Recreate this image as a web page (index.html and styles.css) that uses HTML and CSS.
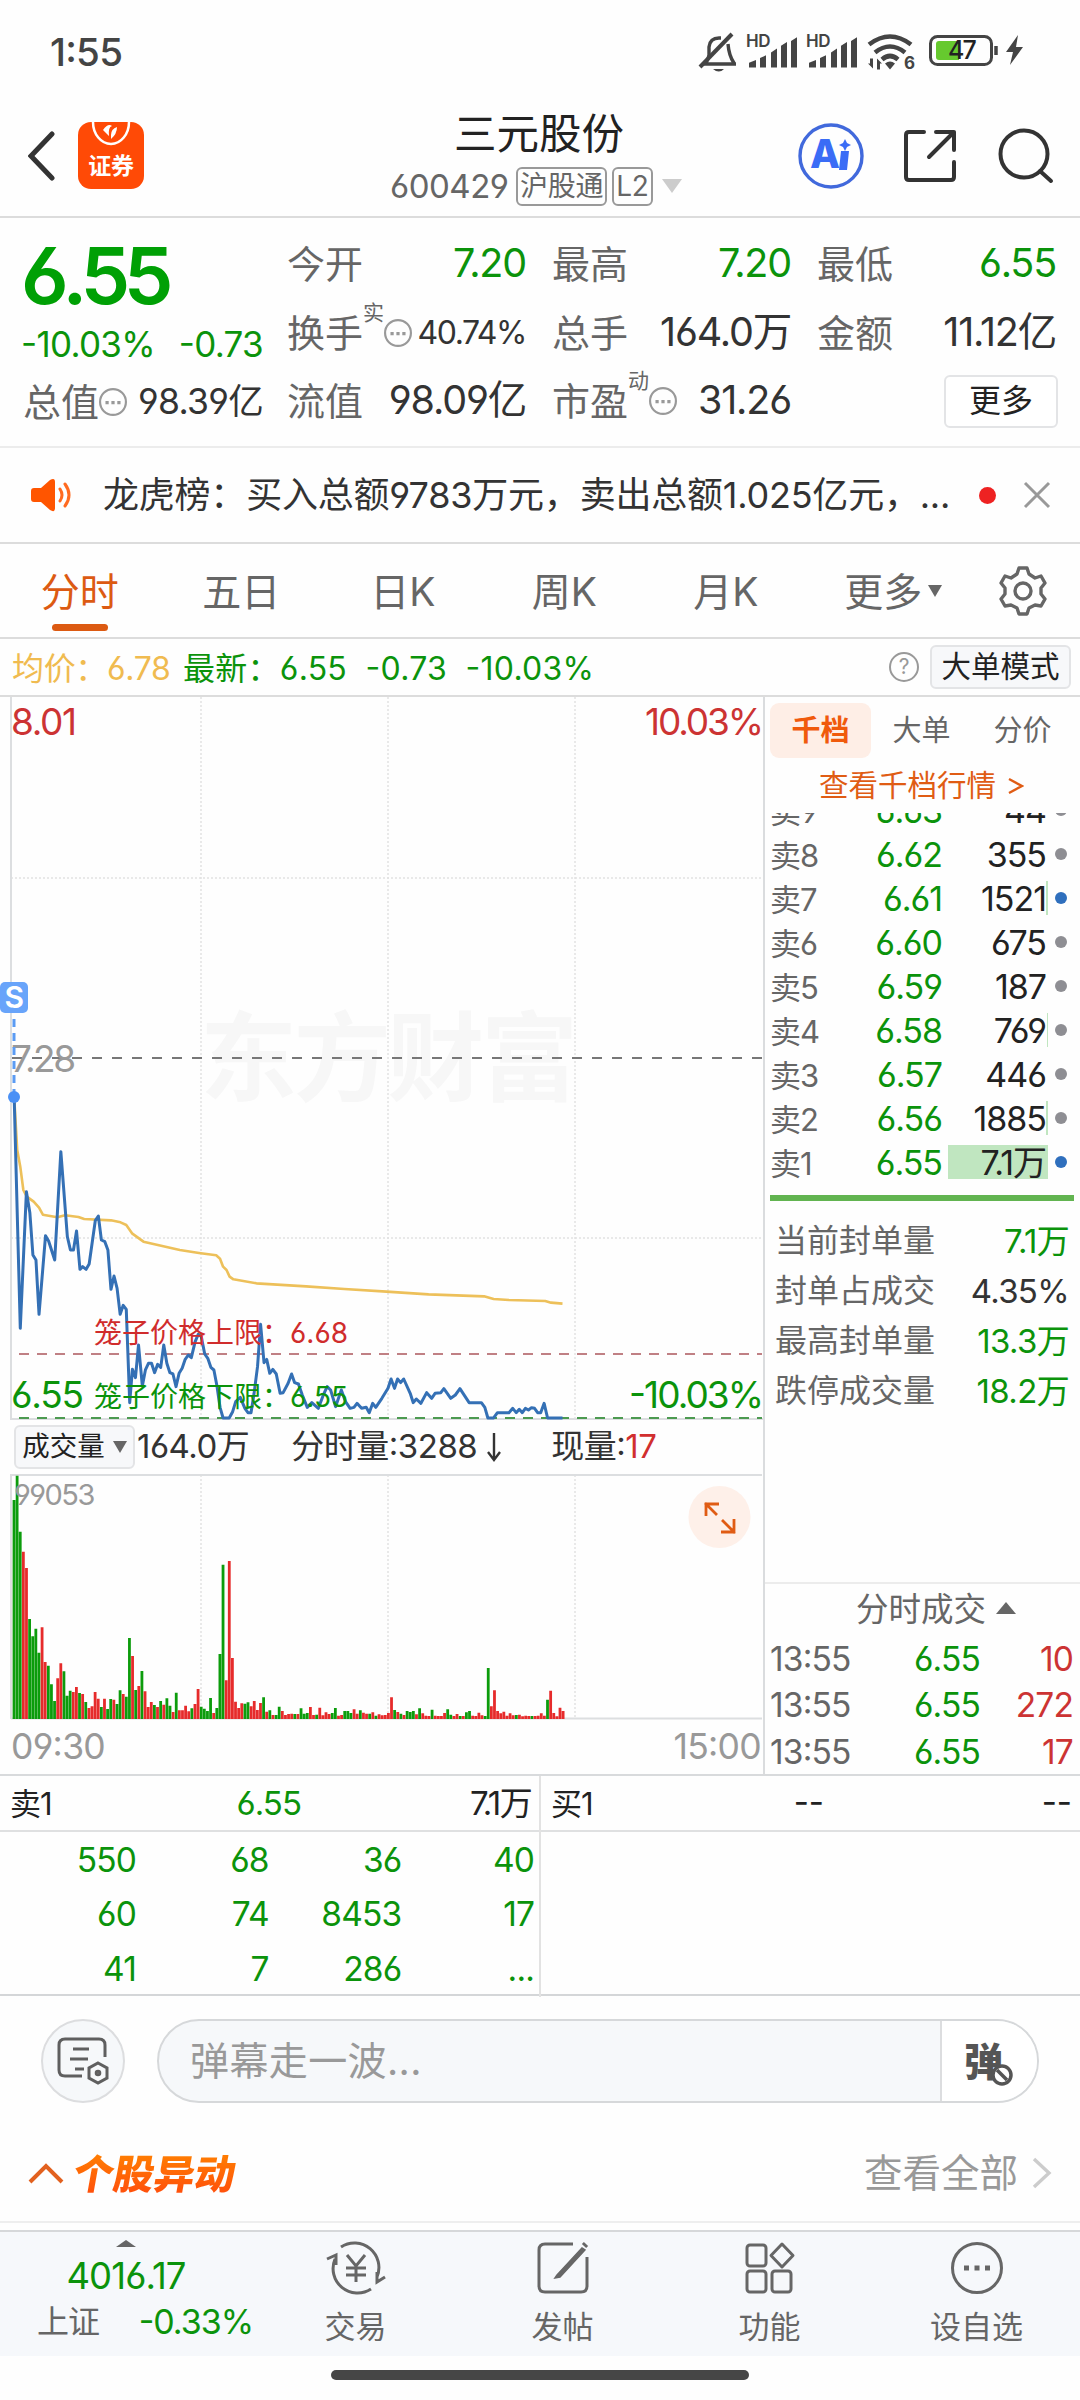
FILE: index.html
```html
<!DOCTYPE html>
<html lang="zh-CN">
<head>
<meta charset="utf-8">
<title>三元股份 600429</title>
<link rel="stylesheet" href="styles.css">
</head>
<body>
<div class="status">
  <span class="clock">1:55</span>
  <svg class="status-icons" width="340" height="44" viewBox="0 0 340 44" fill="none" stroke="#444" stroke-width="3.4">
    <path d="M4 35h34M8 34q2-3 3-8v-8q1-9 10-9h2M30 15q1 12 6 19"/><path d="M2 38 34 5" stroke-width="4"/><path d="M15 40h11q-5 5-11 0z" fill="#444" stroke="none"/>
    <g fill="#444" stroke="none">
      <text x="48" y="18" class="hd">HD</text><path id="sig" d="M51 38v-5l7-3v8zM62 38V28l6-3v13zM73 38V22l6-4v20zM83 38V15l6-4v27zM93 38V10l6-4v32z" transform="translate(0 2.500) scale(1 .95)"/>
      <text x="108" y="18" class="hd">HD</text><use href="#sig" x="60"/>
    </g>
    <g transform="translate(0 -.5)"><path d="M171 16q21-16 42 0M177 24q15-12 30 0M184 31q8-7 16 0" stroke-width="4.600"/><path d="m187 35q5-4 10 0l-5 6zM172 30h3v10l-5-5h2zM179 41V30l5 5h-2v6z" fill="#444" stroke="none"/></g>
    <text x="206" y="40" class="six" fill="#444" stroke="none">6</text>
    <rect x="232.500" y="7.500" width="61" height="28" rx="7" stroke-width="3"/>
    <path d="M238 15q0-3 3-3h20v19h-20q-3 0-3-3z" fill="#66c92e" stroke="none"/>
    <path d="M298 17v9" stroke-width="3.500"/>
    <text x="250" y="30" class="pct" fill="#222" stroke="none">47</text>
    <path d="m320 6-12 17h7l-3 13 13-18h-7z" fill="#444" stroke="none"/>
  </svg>
</div>

<header class="top">
  <div class="top-left">
    <svg width="28" height="50" viewBox="0 0 28 50" fill="none" stroke="#333" stroke-width="5" stroke-linecap="round"><path d="M24 3 3 25l21 22"/></svg>
    <div class="logo">
      <svg width="66" height="25" viewBox="0 0 66 25" fill="none"><path d="M15 0a18 22 0 0 0 36 0" stroke="#fff" stroke-width="2.500"/><path d="M25 8q5-7 9-4-4 1-3 10zM33 13q0-6 6-8 0 7-6 12z" fill="#fff"/></svg>
      <span>证券</span>
    </div>
  </div>
  <div class="title">
    <h1>三元股份</h1>
    <div class="code"><span>600429</span><i>沪股通</i><i>L2</i><b class="tri-down light"></b></div>
  </div>
  <div class="top-right">
    <svg width="66" height="66" viewBox="0 0 66 66" fill="#3a6cf6"><circle cx="33" cy="33" r="31" fill="none" stroke="#4169dc" stroke-width="3.400"/><text x="12" y="45" class="ai">A</text><path d="M43 28h8l-2 19h-8zM47 16l2 4 4 2-4 2-2 4-2-4-4-2 4-2z"/></svg>
    <svg width="54" height="54" viewBox="0 0 54 54" fill="none" stroke="#333" stroke-width="4" stroke-linecap="round" stroke-linejoin="round"><path d="M21 3H6q-3 0-3 3v42q0 3 3 3h42q3 0 3-3V33M33 3h18v18M51 3 26 28"/></svg>
    <svg width="56" height="56" viewBox="0 0 56 56" fill="none" stroke="#333" stroke-width="4" stroke-linecap="round"><circle cx="26" cy="26" r="23.500"/><path d="m42 43 11 10"/></svg>
  </div>
</header>

<section class="quote">
  <div class="q-main">
    <div class="price">6.55</div>
    <div class="chg"><span>-10.03%</span><span>-0.73</span></div>
    <div class="cell small"><label>总值</label><svg class="more" viewBox="0 0 26 26"><use href="#dots"/></svg><em>98.39亿</em></div>
  </div>
  <div class="q-grid">
    <div class="cell g"><label>今开</label><em>7.20</em></div>
    <div class="cell g"><label>最高</label><em>7.20</em></div>
    <div class="cell g"><label>最低</label><em>6.55</em></div>
    <div class="cell small"><label>换手</label><sup>实</sup><svg class="more" viewBox="0 0 26 26"><g id="dots"><circle cx="13" cy="13" r="12" fill="none" stroke="#999" stroke-width="2"/><path d="M6 12h3v3h-3zM11.500 12h3v3h-3zM17 12h3v3h-3z" fill="#999"/></g></svg><em class="tight">40.74%</em></div>
    <div class="cell"><label>总手</label><em>164.0万</em></div>
    <div class="cell"><label>金额</label><em>11.12亿</em></div>
    <div class="cell"><label>流值</label><em>98.09亿</em></div>
    <div class="cell"><label>市盈</label><sup>动</sup><svg class="more" viewBox="0 0 26 26"><use href="#dots"/></svg><em>31.26</em></div>
    <div class="cell end"><button>更多</button></div>
  </div>
</section>

<section class="news">
  <svg width="42" height="36" viewBox="0 0 42 36"><path d="M3 11h7l9-8q5-3 5 2v26q0 5-5 2l-9-8H3q-3 0-3-3v-8q0-3 3-3z" fill="#ff5500"/><path d="M29 12q4 6 0 12M34 7q8 11 0 22" fill="none" stroke="#ff6a20" stroke-width="3" stroke-linecap="round"/></svg>
  <p>龙虎榜：买入总额9783万元，卖出总额1.025亿元，...</p>
  <i class="dot"></i>
  <svg width="28" height="28" viewBox="0 0 28 28" stroke="#999" stroke-width="3"><path d="m2 2 24 24M26 2 2 26"/></svg>
</section>

<nav class="tabs">
  <a class="on">分时</a><a>五日</a><a>日K</a><a>周K</a><a>月K</a><a class="more-tab">更多<b class="tri-down"></b></a>
  <span class="gear"><svg width="48" height="50" viewBox="0 0 48 50" fill="none" stroke="#666" stroke-width="3.400" stroke-linejoin="round"><path d="M20 2h8l2 6 6 4 6-2 4 7-4 5v6l4 5-4 7-6-1-6 3-2 6h-8l-2-6-6-3-6 1-4-7 4-5v-6l-4-5 4-7 6 2 6-4z"/><circle cx="24" cy="25" r="8"/></svg></span>
</nav>

<div class="info">
  <span class="avg">均价：6.78</span><span class="last">最新：6.55&nbsp; -0.73&nbsp; -10.03%</span>
  <span class="help">?</span><button>大单模式</button>
</div>

<main class="board">
  <div class="charts">
    <svg class="plot" width="763" height="724" viewBox="0 697 763 724">
      <text x="200" y="1093" class="mark" textLength="378">东方财富</text>
      <g class="grid"><path d="M201 697v721M388 697v721M575 697v721M11 878h751M11 1238h751"/></g>
      <path d="M11 697v722h752" class="axis"/>
      <path d="M12 1058h750" stroke="#777" stroke-width="2" stroke-dasharray="10 10" stroke-dashoffset="0"/>
      <path d="M19 1354h743" stroke="#c08084" stroke-width="2" stroke-dasharray="10 8"/>
      <path d="M19 1418h743" stroke="#4c9a50" stroke-width="2" stroke-dasharray="10 8"/>
      <g class="lbl">
        <text x="11" y="1072" fill="#999" textLength="64">7.28</text>
        <text x="11" y="735" fill="#c33" textLength="65">8.01</text>
        <text x="645" y="735" fill="#c33" textLength="118">10.03%</text>
      </g>
      <g class="curve" transform="translate(0 1080) scale(.38265 .33333)" fill="none">
        <polyline stroke="#edc05a" stroke-width="2.600" points="37,50 45,210 53,260 61,330 70,350 88,365 102,383 112,404 150,412 170,406 205,411 220,417 290,421 315,427 330,435 345,460 375,485 470,510 520,519 565,526 575,536 583,560 592,570 600,590 610,598 670,610 800,619 900,627 1010,635 1120,643 1265,649 1290,657 1330,660 1425,663 1440,668 1470,671"/>
        <polyline stroke="#3470b5" stroke-width="3" points="37,50 53,745 69,335 78,398 86,525 94,540 102,703 119,467 127,483 143,540 159,215 176,470 184,510 192,510 200,453 209,568 216,560 225,568 233,552 249,422 257,408 265,480 274,485 282,510 290,628 298,588 306,625 314,703 322,676 330,688 339,968 346,868 354,893 362,795 372,918 380,870 388,850 396,850 404,878 412,853 420,862 428,795 436,850 444,878 452,882 460,920 468,880 476,865 484,838 492,825 500,833 510,785 518,763 526,770 535,822 543,835 551,862 559,870 567,918 575,982 583,1014 599,1014 608,995 616,965 628,952 640,985 648,998 656,998 664,940 673,860 681,733 690,848 697,838 705,880 713,868 722,882 732,940 740,938 753,910 762,882 770,908 780,912 790,945 803,982 815,968 832,985 845,945 855,920 864,930 877,980 892,930 903,965 915,985 925,982 933,970 945,985 957,982 965,998 974,970 982,982 998,955 1014,925 1022,897 1031,925 1039,897 1047,908 1055,897 1072,940 1080,968 1088,957 1100,970 1115,938 1128,955 1137,940 1152,938 1160,926 1178,955 1190,945 1202,926 1226,968 1258,968 1267,982 1275,1014 1290,1014 1300,998 1330,998 1340,985 1349,998 1357,988 1365,998 1373,985 1381,990 1389,983 1397,985 1405,998 1413,998 1422,970 1431,1014 1470,1014"/>
      </g>
      <g class="lbl">
        <text x="11" y="1408" fill="#0b930b" textLength="72">6.55</text>
        <text x="629" y="1408" fill="#0b930b" textLength="134">-10.03%</text>
      </g>
      <g class="cage">
        <text x="94" y="1343" fill="#d02c2c">笼子价格上限：<tspan x="290" textLength="58">6.68</tspan></text>
        <text x="94" y="1407" fill="#0b930b">笼子价格下限：<tspan x="290" textLength="58">6.55</tspan></text>
      </g>
      <path d="M14 1019v74" stroke="#5b9bf3" stroke-width="3" stroke-dasharray="8 6"/>
      <circle cx="14" cy="1097" r="6" fill="#4a90f5"/>
      <rect x="0" y="982" width="28" height="31" rx="5" fill="#68a4fa"/>
      <text x="14" y="1008" class="s-mark">S</text>
    </svg>
    <div class="vol-head"><button>成交量<b class="tri-down"></b></button><span>164.0万</span><span>分时量:3288<svg width="18" height="30" viewBox="0 0 18 30" fill="none" stroke="#333" stroke-width="2.400"><path d="M9 1v27M3 20l6 8 6-8"/></svg></span><span>现量:<em>17</em></span></div>
    <svg class="vol" width="763" height="246" viewBox="0 1474 763 246">
      <g class="grid"><path d="M201 1475v244M388 1475v244M575 1475v244"/></g>
      <path d="M11 1719V1475h751" class="axis"/><path d="M11 1718.500h751" class="axis"/>
      <g id="bars"></g>
      <text x="14" y="1505" class="vmax" textLength="81">99053</text>
      <circle cx="719.500" cy="1517" r="31" fill="#fef0e9"/>
      <path d="M706 1516v-12h13M705 1503l12 12M734 1519v13h-13M735 1533l-13-13" fill="none" stroke="#e05c14" stroke-width="2.800"/>
    </svg>
    <div class="times"><span>09:30</span><span>15:00</span></div>
  </div>

  <aside class="depth">
    <div class="d-tabs"><a class="on">千档</a><a>大单</a><a>分价</a></div>
    <a class="link">查看千档行情 <svg width="16" height="18" viewBox="0 0 16 18" fill="none" stroke="#e05c14" stroke-width="2.400"><path d="m1 2 13 7-13 7"/></svg></a>
    <div class="asks">
      <div class="ask"><span>卖9</span><b>6.63</b><em>44</em><i></i></div>
      <div class="ask"><span>卖8</span><b>6.62</b><em>355</em><i></i></div>
      <div class="ask"><span>卖7</span><b>6.61</b><em><u style="width:2px"></u>1521</em><i class="blue"></i></div>
      <div class="ask"><span>卖6</span><b>6.60</b><em>675</em><i></i></div>
      <div class="ask"><span>卖5</span><b>6.59</b><em>187</em><i></i></div>
      <div class="ask"><span>卖4</span><b>6.58</b><em><u style="width:1px"></u>769</em><i></i></div>
      <div class="ask"><span>卖3</span><b>6.57</b><em>446</em><i></i></div>
      <div class="ask"><span>卖2</span><b>6.56</b><em><u style="width:2px"></u>1885</em><i></i></div>
      <div class="ask"><span>卖1</span><b>6.55</b><em><u style="width:100px"></u>7.1万</em><i class="blue"></i></div>
    </div>
    <div class="ratio"></div>
    <dl class="stats">
      <div><dt>当前封单量</dt><dd class="g">7.1万</dd></div>
      <div><dt>封单占成交</dt><dd>4.35%</dd></div>
      <div><dt>最高封单量</dt><dd class="g">13.3万</dd></div>
      <div><dt>跌停成交量</dt><dd class="g">18.2万</dd></div>
    </dl>
    <div class="ticks">
      <h3>分时成交<b class="tri-up"></b></h3>
      <div><span>13:55</span><b>6.55</b><em>10</em></div>
      <div><span>13:55</span><b>6.55</b><em>272</em></div>
      <div><span>13:55</span><b>6.55</b><em>17</em></div>
    </div>
  </aside>
</main>

<section class="queue">
  <div class="side">
    <div class="q-head"><span>卖1</span><b>6.55</b><em>7.1万</em></div>
    <div class="q-body"><span>550</span><span>68</span><span>36</span><span>40</span><span>60</span><span>74</span><span>8453</span><span>17</span><span>41</span><span>7</span><span>286</span><span>...</span></div>
  </div>
  <div class="side">
    <div class="q-head"><span>买1</span><b class="none">--</b><em class="dash">--</em></div>
  </div>
</section>

<section class="danmu">
  <div class="round"><svg width="54" height="50" viewBox="0 0 54 50" fill="none" stroke="#5f5f5f" stroke-width="3"><path d="M26 40H9q-6 0-6-6V9q0-6 6-6h34q6 0 6 6v12M17 13h16M14 23h18M19 33h9"/><path d="m42 27 9 5v10l-9 5-9-5V32z"/><circle cx="42" cy="37" r="1.800"/></svg></div>
  <div class="pill"><span>弹幕走一波...</span><div class="toggle"><b>弹</b><svg width="22" height="22" viewBox="0 0 22 22" fill="none" stroke="#555" stroke-width="3.500"><circle cx="11" cy="11" r="9" fill="#fff"/><path d="m6 6 10 10"/></svg></div></div>
</section>

<section class="moves">
  <svg width="36" height="22" viewBox="0 0 36 22" fill="none" stroke="#e2611f" stroke-width="4"><path d="m2 20 16-16 16 16"/></svg>
  <h2>个股异动</h2>
  <span>查看全部</span>
  <svg width="20" height="32" viewBox="0 0 20 32" fill="none" stroke="#ccc" stroke-width="3.400"><path d="m2 2 15 14L2 30"/></svg>
</section>

<footer class="bar">
  <div class="index"><b class="tri-up"></b><strong>4016.17</strong><div><span>上证</span><em>-0.33%</em></div></div>
  <a><svg viewBox="0 0 60 54"><path d="M15 6a24.500 24.500 0 0 1 36 30M45 48A24.500 24.500 0 0 1 9 18M1 18l9-4v10M59 36l-8 5V31"/><path d="m21 14 9 11 9-11M30 25v16M20 27h20M20 34h20"/></svg>交易</a>
  <a><svg viewBox="0 0 60 54"><path d="M40 3H12q-6 0-6 6v36q0 6 6 6h36q6 0 6-6V16"/><path d="M24 34 49 7l3 2-25 27-5 1z" fill="#666" stroke-width="1.500"/><path d="m51 5 2-2" stroke-width="6"/></svg>发帖</a>
  <a><svg viewBox="0 0 60 54"><rect x="7" y="4" width="19" height="21" rx="3"/><rect x="7" y="30" width="19" height="21" rx="3"/><rect x="32" y="30" width="19" height="21" rx="3"/><path d="m42 3 11 11.500L42 26 31 14.500z" stroke-linejoin="round"/></svg>功能</a>
  <a><svg viewBox="0 0 60 54"><circle cx="30" cy="27" r="24.500"/><path d="M17 27h5M27.500 27h5M38 27h5" stroke-width="5"/></svg>设自选</a>
</footer>
<div class="home"><i></i></div>
<script src="volume.js"></script>
</body>
</html>
```
FILE: styles.css
```css
* { box-sizing: border-box; margin: 0; padding: 0; }
body {
  width: 1080px; height: 2400px; overflow: hidden; background: #fefefe; color: #333;
  font-family: Inter, "Noto Sans CJK SC", sans-serif; letter-spacing: -.02em;
  font-feature-settings: "cv03", "cv04", "case"; line-height: 1;
}
em, i { font-style: normal; }
b { font-weight: 400; }
button { font: inherit; letter-spacing: 0; color: #222; background: #f7f8fa; border: 2px solid #e3e4e6; border-radius: 6px; }
svg { flex: none; display: block; }
.g { color: #0b930b; }
.tri-down { display: inline-block; border: 7px solid transparent; border-top: 12px solid #666; border-bottom: 0; }
.tri-down.light { border-width: 14px 10px 0; border-top-color: #ccc; margin-left: 9px; }
.tri-up { display: inline-block; border: 10px solid transparent; border-bottom: 12px solid #666; border-top: 0; }

.status { height: 100px; display: flex; justify-content: space-between; align-items: flex-start; padding: 29px 42px 0 50px; color: #444; }
.clock { font-size: 38.500px; line-height: 46px; letter-spacing: -.02em; font-weight: 500; }
.hd { font: 600 17px Inter; letter-spacing: -.5px; }
.six { font: 700 17px Inter; }
.pct { font: 500 25px Inter; letter-spacing: -2px; }

.top { height: 118px; border-bottom: 2px solid #dcdcdc; display: grid; grid-template-columns: 380px 320px 380px; align-items: start; }
.top-left { display: flex; align-items: center; padding: 22px 0 0 28px; gap: 22px; }
.logo { width: 66px; height: 67px; border-radius: 13px; background: #ff4a06; color: #fff; text-align: center; }
.logo span { display: block; font: 600 23px/34px "Noto Sans CJK SC"; }
.title { text-align: center; padding-top: 13px; }
.title h1 { font-size: 42.500px; font-weight: 400; line-height: 42px; color: #222; letter-spacing: 0; margin-left: -2px; }
.code { display: flex; align-items: center; height: 40px; margin: 11px 0 0 10px; font-size: 33px; color: #666; }
.code span { width: 121px; letter-spacing: -.015em; text-align: left; }
.code i { border: 2px solid #999; border-radius: 6px; height: 39px; font-size: 28px; line-height: 35px; padding: 0 2px; margin-left: 5px; letter-spacing: -.01em; }
.top-right { display: flex; align-items: center; padding: 23px 0 0 98px; }
.top-right svg:nth-child(2) { margin-left: 39px; }
.top-right svg:nth-child(3) { margin-left: 41px; }
.ai { font: 800 39px Inter; }

.quote { height: 230px; border-bottom: 2px solid #ececec; display: flex; padding: 11px 24px 0 23px; }
.q-main { width: 241px; margin-right: 24px; }
.price { font-size: 79px; line-height: 92px; height: 90px; font-weight: 600; letter-spacing: -.08em; margin-left: -2px; color: #00a005; }
.chg { display: flex; justify-content: space-between; height: 48px; line-height: 50px; font-size: 35px; color: #0b930b; letter-spacing: -.02em; margin-left: -2px; }
.q-grid { flex: 1; display: grid; grid-template-columns: repeat(3, 239px); column-gap: 26px; grid-template-rows: repeat(3, 68.5px); }
.cell { display: flex; align-items: center; height: 70px; }
.cell label { font-size: 38px; color: #666; letter-spacing: 0; }
.cell em { margin-left: auto; font-size: 39.500px; letter-spacing: -.03em; }
.cell.small em { font-size: 35.500px; letter-spacing: -.02em; }
.cell.small em.tight { font-size: 32px; letter-spacing: -.045em; }
.cell sup { font-size: 21px; color: #666; align-self: flex-start; margin-top: 4px; }
.more { width: 28px; height: 28px; }
.cell.g em { color: #0b930b; }
.cell.end { justify-content: flex-end; }
.cell button { width: 114px; height: 53px; font-size: 32px; background: #fff; margin-right: -2px; }

.news { height: 96px; border-bottom: 2px solid #dcdcdc; display: flex; align-items: center; padding: 0 29px 0 31px; }
.news p { margin-left: 30px; width: 870px; font-size: 36px; letter-spacing: -.006em; white-space: nowrap; }
.dot { width: 17px; height: 17px; border-radius: 50%; background: #ee2222; margin: 0 27px 0 9px; }

.tabs { height: 95px; border-bottom: 2px solid #dcdcdc; display: flex; padding-top: 1px; }
.tabs a { width: 161.5px; display: flex; align-items: center; justify-content: center; font-size: 39px; color: #666; letter-spacing: 0; position: relative; padding-right: 2px; }
.tabs a .tri-down { margin-left: 6px; }
.tabs a.more-tab { padding: 0 0 0 10px; }
.tabs .on { color: #dc5a12; }
.tabs .on::after { content: ""; position: absolute; left: 52px; bottom: 6px; width: 56px; height: 7px; border-radius: 4px; background: #dc5a12; }
.gear { margin-left: 30px; align-self: center; }

.info { height: 58px; border-bottom: 2px solid #dcdcdc; display: flex; align-items: center; padding: 0 9px 0 12px; font-size: 32px; }
.info .avg, .info .last { padding-top: 3px; white-space: nowrap; }
.avg { color: #f0bb50; width: 171px; letter-spacing: -.01em; }
.last { color: #0b930b; letter-spacing: .008em; }
.help { width: 30px; height: 30px; border: 2px solid #999; border-radius: 50%; color: #999; font-size: 21px; line-height: 26px; text-align: center; margin: 0 11px 0 auto; }
.info button { width: 141px; height: 44px; font-size: 29.500px; }

.board { height: 1079px; display: flex; border-bottom: 2px solid #d8dadc; }
.charts { width: 763px; }
.plot text { font-feature-settings: "cv03", "cv04", "case"; }
.grid path { stroke: #e2e2e2; stroke-width: 1.500; stroke-dasharray: 2 2; fill: none; }
.axis { stroke: #dcdee0; stroke-width: 2; fill: none; }
.curve polyline { vector-effect: non-scaling-stroke; stroke-linejoin: round; }
.lbl { font-size: 37px; letter-spacing: -.03em; }
.cage { font-size: 28px; letter-spacing: 0; }
.mark { font: 700 97px "Noto Sans CJK SC"; fill: #f7f7f7; letter-spacing: 0; }
.s-mark { font: 600 30px Inter; fill: #fff; text-anchor: middle; }
.vol-head { height: 53px; display: flex; align-items: center; padding: 0 0 2px 14px; font-size: 33px; }
.vol-head button { width: 121px; height: 44px; font-size: 27.500px; display: flex; align-items: center; justify-content: center; gap: 8px; }
.vol-head span { white-space: nowrap; letter-spacing: -.015em; margin-left: 2px; display: flex; align-items: center; }
.vol-head span:nth-of-type(2) { margin-left: 42px; }
.vol-head span:nth-of-type(2) svg { margin-left: 8px; }
.vol-head span:nth-of-type(3) { margin-left: 48px; }
.vol-head em { color: #d12f2f; }
.vmax { font-size: 29px; fill: #999; }
.times { display: flex; justify-content: space-between; padding: 0 2px 0 11px; font-size: 35.500px; line-height: 54px; color: #999; letter-spacing: -.02em; }

.depth { width: 317px; border-left: 2px solid #dadcde; display: flex; flex-direction: column; }
.d-tabs { display: flex; height: 61px; padding: 6px 0 0 5px; }
.d-tabs a { width: 101px; height: 55px; font-size: 29px; line-height: 56px; text-align: center; color: #666; border-radius: 9px; letter-spacing: 0; }
.d-tabs .on { background: #feeee6; color: #f05a0c; font-weight: 600; }
.link { height: 55px; display: flex; align-items: center; padding-left: 54px; gap: 12px; font-size: 29.500px; color: #e05c14; letter-spacing: 0; }
.asks { height: 372px; display: flex; flex-direction: column; justify-content: flex-end; overflow: hidden; }
.ask { flex: none; height: 44px; display: flex; align-items: center; font-size: 34px; padding-left: 5px; letter-spacing: -.03em; }
.ask span { width: 71px; color: #666; font-size: 31px; }
.ask b { width: 101px; text-align: right; color: #0b930b; }
.ask em { flex: 1; text-align: right; color: #222; height: 34px; line-height: 34px; display: flex; justify-content: flex-end; position: relative; z-index: 0; padding-right: 2px; }
.ask u { position: absolute; right: 0; top: -1px; height: 34px; background: #c0e6c0; z-index: -1; }
.ask i { width: 12px; height: 12px; border-radius: 50%; background: #8e8e93; margin: 0 13px 0 7px; position: relative; top: -1px; }
.ask i.blue { background: #2f6fbd; }
.ratio { height: 6px; margin: 10px 6px 0 5px; background: #62b450; }
.stats { padding: 15px 11px 0 10px; }
.stats div { height: 50px; display: flex; align-items: center; justify-content: space-between; }
.stats dt { font-size: 32px; color: #666; letter-spacing: 0; }
.stats dd { font-size: 33px; letter-spacing: -.02em; }
.ticks { margin-top: auto; border-top: 2px solid #ececec; height: 192px; padding: 0 7px 0 5px; }
.ticks h3 { font-size: 32.500px; font-weight: 400; color: #666; height: 52px; line-height: 52px; padding-left: 86px; display: flex; align-items: center; gap: 10px; letter-spacing: 0; }
.ticks div { height: 46.500px; display: grid; grid-template-columns: 102px 108px 1fr; align-items: center; font-size: 33.500px; letter-spacing: -.025em; }
.ticks h3 b { position: relative; top: -2px; }
.ticks span { color: #666; }
.ticks b { color: #0b930b; text-align: right; }
.ticks em { color: #c33; text-align: right; }

.queue { height: 220px; display: grid; grid-template-columns: 541px 539px; border-bottom: 2px solid #d4d6d8; }
.side:first-child { border-right: 2px solid #e2e2e2; }
.q-head { height: 56px; border-bottom: 2px solid #dfe0e1; display: flex; align-items: center; padding: 1px 8px 0 10px; font-size: 33px; letter-spacing: -.03em; color: #222; }
.q-head b { width: 248px; text-align: right; color: #0b930b; }
.q-head .none { color: #222; width: 230px; }
.q-head em { margin-left: auto; letter-spacing: -.05em; }
.q-head .none, .q-head .dash { letter-spacing: 0; }
.q-head span { width: 43px; font-size: 31px; }
.q-body { display: grid; grid-template-columns: 136px repeat(3, 132.700px); grid-auto-rows: 54.500px; align-items: center; text-align: right; font-size: 33.500px; color: #0b930b; letter-spacing: -.025em; padding-top: 1px; }

.danmu { height: 129px; display: flex; align-items: center; padding: 1px 41px 0; gap: 32px; }
.round { width: 84px; height: 84px; border-radius: 50%; background: #f6f8fa; border: 2px solid #dcdddf; display: flex; align-items: center; justify-content: center; }
.pill { flex: 1; height: 84px; border-radius: 42px; background: #f6f8fa; border: 2px solid #d6d8da; display: flex; overflow: hidden; }
.pill span { flex: 1; padding-left: 31px; font-size: 39px; line-height: 80px; color: #999; letter-spacing: .01em; }
.toggle { width: 97px; background: #fff; border-left: 2px solid #dcdddf; display: flex; align-items: center; padding-left: 22px; }
.toggle b { font: 900 39px/40px "Noto Sans CJK SC"; color: #555; margin-top: -5px; }
.toggle svg { margin: 28px 0 0 -12px; }

.moves { height: 98px; border-bottom: 2px solid #eee; display: flex; align-items: center; padding: 0 28px; }
.moves h2 { margin: -2px 0 0 10px; font: 900 40.500px/48px "Noto Sans CJK SC"; letter-spacing: 0; transform: skewX(-10deg); background: linear-gradient(#ff8500, #ff4d0c); background-clip: text; -webkit-background-clip: text; color: transparent; }
.moves span { margin: 0 14px 0 auto; font-size: 38.500px; letter-spacing: 0; color: #999; }

.bar { height: 126px; margin-top: 7px; border-top: 2px solid #d6d8da; background: #f6f8fb; display: flex; color: #666; }
.bar a { width: 207px; padding-top: 9px; text-align: center; font-size: 31px; line-height: 64px; letter-spacing: 0; }
.bar a svg { width: 60px; height: 54px; margin: 0 auto; fill: none; stroke: #666; stroke-width: 3; }
.index { width: 252px; text-align: center; color: #0b930b; display: flex; flex-direction: column; align-items: center; padding-top: 8px; }
.index .tri-up { border-bottom-width: 7px; }
.index strong { font-weight: 400; font-size: 36.500px; line-height: 58px; letter-spacing: -.025em; }
.index div { display: flex; width: 216px; justify-content: space-between; margin-left: 38px; font-size: 34px; line-height: 34px; letter-spacing: -.03em; }
.index span { font-size: 32px; color: #666; }
.home { height: 44px; padding-top: 14px; }
.home i { display: block; width: 418px; height: 10px; border-radius: 5px; background: #464646; margin: 0 auto; }
```
FILE: volume.js
```javascript
// One entry per minute: g = falling, r = rising, number = bar height in thirds of a pixel.
const minutes = `g657 g730 g562 r502 r453 g300 g248 g271 g199 r275 r171 g160 g104 g54 r122 r167 g143 g70 g85 r81
r96 g78 r75 g51 r33 r38 r81 r61 g36 r61 g30 g60 r58 g45 g86 r75 g67 g243 r189 g87 r99 g144 r83 r36 r51 g42 r36 g54
r43 g62 g40 r21 g79 r26 r26 r40 r23 g32 r45 r90 g37 g31 g24 g63 r18 g33 g195 g463 r116 r474 r183 r52 r33 r47 g46
g50 r38 r54 r27 r48 g65 r22 g26 r12 g12 g37 r24 r12 r15 r16 g15 r15 g32 g16 g18 r36 r12 g13 r34 r11 r20 r15 g18
g33 r10 r12 g24 g24 g18 r29 r16 g26 r19 r16 g16 r20 g10 r14 r11 r12 r18 r65 g27 r21 g16 r12 g24 g21 g24 r14 g32
r17 r10 r9 g28 r10 r9 r9 r18 g29 g13 r9 r15 g9 r9 g20 g24 r10 r9 r19 r11 g9 g153 r38 r86 r24 r17 r22 r10 r17 r11
g12 r13 r8 r10 r9 g9 r9 r10 r17 r10 g58 r85 r18 r8 r34 r24`.split(/\s+/);
const paths = { g: "", r: "" };
minutes.forEach((m, i) => {
  const h = m.slice(1) / 3;
  paths[m[0]] += `M${(14 + i * 3.12).toFixed(2)} 1719v-${h.toFixed(1)}`;
});
document.getElementById("bars").innerHTML =
  `<path d="${paths.g}" stroke="#0c9c0c" stroke-width="2.8"/><path d="${paths.r}" stroke="#e62b2b" stroke-width="2.8"/>`;
```
